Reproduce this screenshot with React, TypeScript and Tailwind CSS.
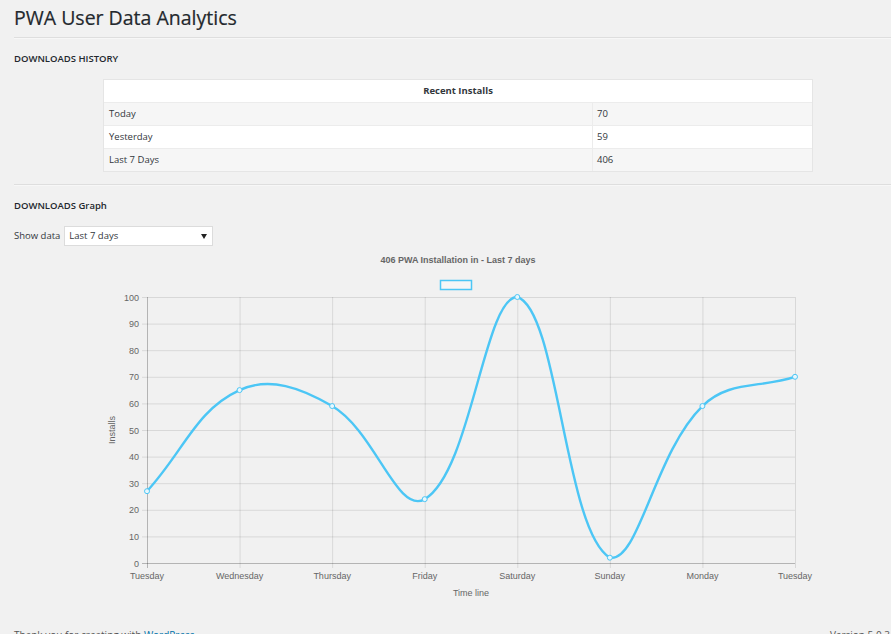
import React from "react"

type Pt = { x: number; y: number }

const labels = ["Tuesday", "Wednesday", "Thursday", "Friday", "Saturday", "Sunday", "Monday", "Tuesday"]
const values = [27, 65, 59, 24, 100, 2, 59, 70]

const X0 = 147
const X1 = 795
const Y0 = 563
const Y100 = 297

const xAt = (i: number) => X0 + ((X1 - X0) * i) / (labels.length - 1)
const yAt = (v: number) => Y0 - ((Y0 - Y100) * v) / 100

// same spline as chart.js (tension 0.4)
const buildPath = (pts: Pt[], t = 0.4) => {
  const ctrl = pts.map((cur, i) => {
    const prev = pts[i - 1] ?? cur
    const next = pts[i + 1] ?? cur
    const d01 = Math.hypot(cur.x - prev.x, cur.y - prev.y)
    const d12 = Math.hypot(next.x - cur.x, next.y - cur.y)
    let s01 = d01 / (d01 + d12)
    let s12 = d12 / (d01 + d12)
    if (isNaN(s01)) s01 = 0
    if (isNaN(s12)) s12 = 0
    const fa = t * s01
    const fb = t * s12
    const clampY = (y: number) => Math.min(Math.max(y, Y100), Y0)
    return {
      prev: { x: cur.x - fa * (next.x - prev.x), y: clampY(cur.y - fa * (next.y - prev.y)) },
      next: { x: cur.x + fb * (next.x - prev.x), y: clampY(cur.y + fb * (next.y - prev.y)) },
    }
  })
  let d = `M ${pts[0].x} ${pts[0].y}`
  for (let i = 1; i < pts.length; i++) {
    const a = ctrl[i - 1].next
    const b = ctrl[i].prev
    d += ` C ${a.x} ${a.y} ${b.x} ${b.y} ${pts[i].x} ${pts[i].y}`
  }
  return d
}

const InstallsChart = () => {
  const pts = values.map((v, i) => ({ x: xAt(i), y: yAt(v) }))
  const ticks = [0, 10, 20, 30, 40, 50, 60, 70, 80, 90, 100]
  const blue = "#4cc6f5"

  return (
    <svg width={710} height={360} viewBox="103 250 710 360" className="block mx-auto" style={{ fontFamily: "'Liberation Sans', Arial, sans-serif" }}>
      <text x={458} y={263} textAnchor="middle" fontSize={9} fontWeight={700} fill="#666">
        406 PWA Installation in - Last 7 days
      </text>
      <rect x={440.5} y={280.5} width={31} height={9} fill="rgba(255,255,255,0.35)" stroke={blue} strokeWidth={1.5} />

      {ticks.map((v) => (
        <g key={v}>
          <line
            x1={142}
            x2={X1}
            y1={yAt(v) + 0.5}
            y2={yAt(v) + 0.5}
            stroke={v === 0 ? "rgba(0,0,0,0.25)" : "rgba(0,0,0,0.1)"}
            strokeWidth={1}
          />
          <text x={139} y={yAt(v) + 3.5} textAnchor="end" fontSize={9} fill="#666">
            {v}
          </text>
        </g>
      ))}

      {labels.map((l, i) => (
        <g key={i}>
          <line
            x1={xAt(i) + 0.5}
            x2={xAt(i) + 0.5}
            y1={Y100}
            y2={568}
            stroke={i === 0 ? "rgba(0,0,0,0.25)" : "rgba(0,0,0,0.1)"}
            strokeWidth={1}
          />
          <text x={xAt(i)} y={579} textAnchor="middle" fontSize={9} fill="#666">
            {l}
          </text>
        </g>
      ))}

      <text x={471} y={596} textAnchor="middle" fontSize={9} fill="#666">
        Time line
      </text>
      <text x={115} y={430} textAnchor="middle" fontSize={9} fill="#666" transform="rotate(-90 115 430)">
        Installs
      </text>

      <path d={buildPath(pts)} fill="none" stroke={blue} strokeWidth={2.4} />
      {pts.map((p, i) => (
        <circle key={i} cx={p.x} cy={p.y} r={2.5} fill="#e8f7fd" stroke={blue} strokeWidth={1} />
      ))}
    </svg>
  )
}

const rows = [
  { label: "Today", value: "70" },
  { label: "Yesterday", value: "59" },
  { label: "Last 7 Days", value: "406" },
]

const App = () => {
  return (
    <div className="w-[891px] h-[634px] overflow-hidden bg-[#f1f1f1] text-[#444] font-['Open_Sans',sans-serif]">
      <div className="pl-[14px] w-[902px]">
        <h1 className="h-[37px] pt-[5px] text-[19.5px] leading-[26px] text-[#23282d] font-normal [-webkit-text-stroke:0.2px_#23282d]">
          PWA User Data Analytics
        </h1>
        <div className="border-t border-[#dedede] border-b border-b-[#f7f7f7]" />

        <div className="h-[40px] flex items-center text-[9.5px] font-semibold text-[#23282d] uppercase">
          Downloads History
        </div>

        <div className="mx-auto w-[710px] border border-[#e5e5e5] text-[9.5px] text-[#32373c]">
          <div className="h-[22px] bg-white flex items-center justify-center font-bold">Recent Installs</div>
          {rows.map((r, i) => (
            <div
              key={r.label}
              className={`flex h-[23px] border-t border-[#ececec] ${i % 2 === 0 ? "bg-[#f6f6f6]" : "bg-white"}`}
            >
              <div className="w-[489px] flex items-center pl-[5px] border-r border-[#ececec]">{r.label}</div>
              <div className="flex-1 flex items-center pl-[4px]">{r.value}</div>
            </div>
          ))}
        </div>

        <div className="mt-[12px] border-t border-[#dedede] border-b border-b-[#f7f7f7]" />

        <div className="h-[40px] flex items-center text-[9.5px] font-semibold text-[#23282d]">
          DOWNLOADS Graph
        </div>

        <div className="flex items-center gap-[4px] h-[20px] text-[9.5px] text-[#32373c]">
          <span>Show data</span>
          <div className="w-[149px] h-[20px] bg-white border border-[#dcdcdc] flex items-center justify-between pl-[4px] pr-[5px]">
            <span>Last 7 days</span>
            <svg width="6" height="5" viewBox="0 0 6 5">
              <path d="M0 0 L6 0 L3 5 Z" fill="#222" />
            </svg>
          </div>
        </div>

        <div className="mt-[4px] -ml-[14px] w-[916px]">
          <InstallsChart />
        </div>

        <div className="mt-[18px] flex justify-between text-[10px] text-[#555] pr-[2px]">
          <span>
            Thank you for creating with <span className="text-[#0073aa] underline">WordPress</span>.
          </span>
          <span className="pr-[10px]">Version 5.0.3</span>
        </div>
      </div>
    </div>
  )
}

export default App
